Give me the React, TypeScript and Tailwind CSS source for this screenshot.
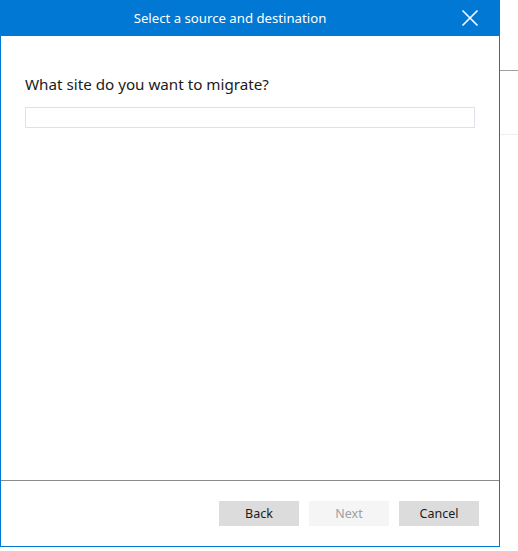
import React from "react";

export default function App() {
  const font = { fontFamily: '"Segoe UI", "Noto Sans", "Open Sans", sans-serif' };
  return (
    <div className="w-[518px] h-[551px] bg-white flex items-start overflow-hidden" style={font}>
      <div className="w-[500px] h-[547px] flex flex-col border-l border-r border-b border-[#0078d4] bg-white shrink-0">
        <div className="h-[36px] bg-[#0078d4] flex items-center relative shrink-0">
          <div className="w-full text-center text-white text-[13.2px] pr-[40px] pt-[2px]">Select a source and destination</div>
          <button className="absolute right-[20px] top-[9px] w-[18px] h-[18px] flex items-center justify-center">
            <svg width="18" height="18" viewBox="0 0 18 18">
              <path d="M1.5 1.5 L16.5 16.5 M16.5 1.5 L1.5 16.5" stroke="white" strokeWidth="1.6" />
            </svg>
          </button>
        </div>
        <div className="flex-1 px-[24px] pt-[38px]">
          <div className="text-[15.2px] text-[#1b1b1b] leading-[21px]">What site do you want to migrate?</div>
          <div className="mt-[12px] h-[21px] w-[450px] border border-[#e1dfec]" />
        </div>
        <div className="border-t border-[#8a8a8a] h-[66px] flex items-start justify-end gap-[10px] pr-[20px] pt-[20px] shrink-0">
          <button className="w-[80px] h-[25px] pt-[2px] bg-[#dcdcdc] text-[12.5px] text-[#1b1b1b]">Back</button>
          <button className="w-[80px] h-[25px] pt-[2px] bg-[#f5f5f5] text-[12.5px] text-[#a0a0a0]">Next</button>
          <button className="w-[80px] h-[25px] pt-[2px] bg-[#dcdcdc] text-[12.5px] text-[#1b1b1b]">Cancel</button>
        </div>
      </div>
      <div className="flex-1 flex flex-col pt-[70px]">
        <div className="border-t border-[#a0a0a0]" />
        <div className="mt-[63px] border-t border-[#f0f0f0]" />
      </div>
    </div>
  );
}
